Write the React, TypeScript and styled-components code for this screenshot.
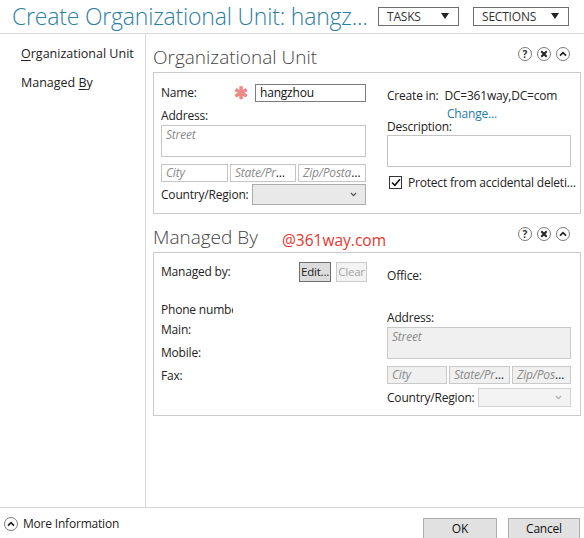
import React from "react";
import styled, { createGlobalStyle } from "styled-components";

const GlobalStyle = createGlobalStyle`
  html, body { margin: 0; padding: 0; background: #fff; }
  body {
    font-family: "Open Sans", "Noto Sans", sans-serif;
    font-size: 12px;
    letter-spacing: -0.2px;
    color: #222;
  }
  * { box-sizing: border-box; }
`;

const Page = styled.div`
  width: 584px;
  height: 538px;
  display: flex;
  flex-direction: column;
  overflow: hidden;
  background: #fff;
`;

const Header = styled.div`
  height: 34px;
  flex-shrink: 0;
  display: flex;
  align-items: center;
  padding: 0 15px 1px 12px;
  border-bottom: 1px solid #d9d9d9;
`;

const Title = styled.h1`
  margin: 0;
  font-weight: 300;
  font-size: 23px;
  line-height: 30px;
  color: #2d7ea3;
  white-space: nowrap;
  letter-spacing: -0.2px;
`;

const Dropdowns = styled.div`
  margin-left: auto;
  display: flex;
  gap: 14px;
`;

const Dropdown = styled.div<{ $w: number }>`
  width: ${(p) => p.$w}px;
  height: 19px;
  border: 1px solid #6e6e6e;
  display: flex;
  align-items: center;
  justify-content: space-between;
  padding: 0 9px 0 8px;
  font-size: 12px;
  color: #333;
  &::after {
    content: "";
    border-left: 4px solid transparent;
    border-right: 4px solid transparent;
    border-top: 6px solid #222;
  }
`;

const Body = styled.div`
  flex: 1;
  display: flex;
  min-height: 0;
`;

const Nav = styled.nav`
  width: 146px;
  flex-shrink: 0;
  border-right: 1px solid #d9d9d9;
  padding: 5px 0 0 21px;
`;

const NavItem = styled.div`
  line-height: 29px;
  font-size: 12.5px;
  letter-spacing: 0;
  color: #222;
  u { text-decoration: underline; text-underline-offset: 2px; }
`;

const Content = styled.div`
  flex: 1;
  padding: 0 3px 0 7px;
  display: flex;
  flex-direction: column;
`;

const SectionHead = styled.div`
  height: 38px;
  padding-top: 12px;
  display: flex;
  align-items: flex-start;
`;

const SectionTitle = styled.h2`
  margin: 0;
  font-weight: 300;
  font-size: 19px;
  line-height: 22px;
  letter-spacing: 0;
  color: #444;
  white-space: nowrap;
`;

const Watermark = styled.span`
  margin-left: 24px;
  margin-top: 3px;
  font-size: 15.5px;
  line-height: 22px;
  font-weight: 500;
  letter-spacing: 0;
  color: #e4362f;
`;

const HeadIcons = styled.div`
  margin-left: auto;
  margin-right: 11px;
  margin-top: 1px;
  display: flex;
  gap: 5px;
`;

const CircleBtn = styled.span`
  width: 14px;
  height: 14px;
  border: 1px solid #7a7a7a;
  border-radius: 50%;
  display: flex;
  align-items: center;
  justify-content: center;
  font-size: 10px;
  font-weight: 700;
  line-height: 1;
  letter-spacing: 0;
  color: #333;
  background: #fff;
`;

const Box = styled.div<{ $h: number; $pt: number }>`
  height: ${(p) => p.$h}px;
  border: 1px solid #cbcbcb;
  padding: ${(p) => p.$pt}px 9px 0 7px;
  display: grid;
  grid-template-columns: 205px 184px;
  column-gap: 21px;
  align-content: start;
`;

const Col = styled.div`
  display: flex;
  flex-direction: column;
`;

const Row = styled.div<{ $h: number; $mt?: number }>`
  height: ${(p) => p.$h}px;
  margin-top: ${(p) => p.$mt ?? 0}px;
  display: flex;
  align-items: center;
`;

const Label = styled.div<{ $lh?: number; $mt?: number; $w?: number }>`
  line-height: ${(p) => p.$lh ?? 16}px;
  margin-top: ${(p) => p.$mt ?? 0}px;
  ${(p) => (p.$w ? `width: ${p.$w}px; flex-shrink: 0;` : "")}
  white-space: nowrap;
  overflow: hidden;
  color: #222;
`;

const Star = styled.span`
  width: 21px;
  font-size: 17px;
  line-height: 18px;
  color: #ec8a8a;
  font-weight: 700;
`;

const Field = styled.div<{ $w?: number; $h: number; $off?: boolean; $dark?: boolean; $multi?: boolean }>`
  ${(p) => (p.$w ? `width: ${p.$w}px; flex-shrink: 0;` : "width: 100%;")}
  height: ${(p) => p.$h}px;
  border: 1px solid ${(p) => (p.$dark ? "#7d7d7d" : p.$off ? "#c9c9c9" : "#c4c4c4")};
  background: ${(p) => (p.$off ? "#f0f0f0" : "#fff")};
  padding: ${(p) => (p.$multi ? "1px 4px 0" : "0 4px")};
  line-height: ${(p) => (p.$multi ? 16 : p.$h - 3)}px;
  font-size: 12px;
  color: #111;
  white-space: nowrap;
  overflow: hidden;
  text-overflow: ellipsis;
`;

const Hint = styled.span`
  font-style: italic;
  color: #8a8a8a;
`;

const FieldRow = styled.div<{ $mt: number }>`
  margin-top: ${(p) => p.$mt}px;
  display: flex;
  gap: 2px;
`;

const Select = styled.div<{ $w: number; $h: number; $off?: boolean }>`
  width: ${(p) => p.$w}px;
  height: ${(p) => p.$h}px;
  margin-left: auto;
  border: 1px solid ${(p) => (p.$off ? "#d3d3d3" : "#acacac")};
  background: ${(p) => (p.$off ? "#f3f3f3" : "#e9e9e9")};
  display: flex;
  align-items: center;
  justify-content: flex-end;
  padding-right: 8px;
  color: ${(p) => (p.$off ? "#b0b0b0" : "#555")};
`;

const Link = styled.div`
  margin-left: 60px;
  margin-top: 2px;
  line-height: 16px;
  color: #1f7aa6;
`;

const CheckRow = styled.div`
  margin-top: 7px;
  display: flex;
  align-items: center;
  gap: 6px;
  padding-left: 2px;
  white-space: nowrap;
`;

const CheckBox = styled.span`
  width: 13px;
  height: 13px;
  border: 1px solid #333;
  background: #fff;
  display: flex;
  align-items: center;
  justify-content: center;
  flex-shrink: 0;
`;

const SmallBtn = styled.div<{ $w: number; $off?: boolean }>`
  width: ${(p) => p.$w}px;
  height: 20px;
  border: 1px solid ${(p) => (p.$off ? "#cacaca" : "#6f6f6f")};
  background: ${(p) => (p.$off ? "#f3f3f3" : "#dcdcdc")};
  color: ${(p) => (p.$off ? "#a3a3a3" : "#222")};
  line-height: 18px;
  font-size: 11.5px;
  text-align: center;
  white-space: nowrap;
  overflow: hidden;
`;

const BtnGroup = styled.div`
  margin-left: auto;
  margin-right: -1px;
  display: flex;
  gap: 5px;
`;

const Footer = styled.div`
  height: 31px;
  flex-shrink: 0;
  border-top: 1px solid #d4d4d4;
  display: flex;
  align-items: flex-start;
  padding: 0 4px 0 4px;
`;

const MoreInfo = styled.div`
  margin-top: 7px;
  display: flex;
  align-items: center;
  gap: 5px;
  color: #222;
`;

const FooterBtn = styled.div<{ $w: number }>`
  width: ${(p) => p.$w}px;
  height: 24px;
  margin-top: 10px;
  border: 1px solid #adadad;
  background: #e1e1e1;
  text-align: center;
  line-height: 20px;
  color: #111;
`;

const FooterBtns = styled.div`
  margin-left: auto;
  display: flex;
  gap: 11px;
`;

const Chevron = () => (
  <svg width="7" height="5" viewBox="0 0 7 5">
    <path d="M1 1 L3.5 3.6 L6 1" fill="none" stroke="currentColor" strokeWidth="1.2" />
  </svg>
);

const UpIcon = () => (
  <svg width="8" height="6" viewBox="0 0 8 6">
    <path d="M1 4.6 L4 1.6 L7 4.6" fill="none" stroke="#222" strokeWidth="1.7" />
  </svg>
);

const HeadTools = () => (
  <HeadIcons>
    <CircleBtn>?</CircleBtn>
    <CircleBtn>
      <svg width="8" height="8" viewBox="0 0 8 8">
        <path d="M1.3 1.3 L6.7 6.7 M6.7 1.3 L1.3 6.7" stroke="#222" strokeWidth="2" />
      </svg>
    </CircleBtn>
    <CircleBtn>
      <UpIcon />
    </CircleBtn>
  </HeadIcons>
);

export default function App() {
  return (
    <>
      <GlobalStyle />
      <Page>
        <Header>
          <Title>Create Organizational Unit: hangz...</Title>
          <Dropdowns>
            <Dropdown $w={81}>TASKS</Dropdown>
            <Dropdown $w={96}>SECTIONS</Dropdown>
          </Dropdowns>
        </Header>

        <Body>
          <Nav>
            <NavItem>
              <u>O</u>rganizational Unit
            </NavItem>
            <NavItem>
              Managed <u>B</u>y
            </NavItem>
          </Nav>

          <Content>
            <SectionHead>
              <SectionTitle>Organizational Unit</SectionTitle>
              <HeadTools />
            </SectionHead>
            <Box $h={142} $pt={11}>
              <Col>
                <Row $h={18}>
                  <Label $w={73}>Name:</Label>
                  <Star>✱</Star>
                  <Field $w={111} $h={18} $dark>
                    hangzhou
                  </Field>
                </Row>
                <Label $mt={6}>Address:</Label>
                <Field $h={32} $multi style={{ marginTop: 1 }}>
                  <Hint>Street</Hint>
                </Field>
                <FieldRow $mt={7}>
                  <Field $w={67} $h={18}>
                    <Hint>City</Hint>
                  </Field>
                  <Field $w={66} $h={18}>
                    <Hint>State/Province</Hint>
                  </Field>
                  <Field $w={68} $h={18}>
                    <Hint>Zip/Postal Code</Hint>
                  </Field>
                </FieldRow>
                <Row $h={21} $mt={2}>
                  <Label>Country/Region:</Label>
                  <Select $w={114} $h={21}>
                    <Chevron />
                  </Select>
                </Row>
              </Col>
              <Col>
                <Label $mt={4}>Create in:&nbsp; DC=361way,DC=com</Label>
                <Link>Change...</Link>
                <Label $lh={14} $mt={-2}>
                  Description:
                </Label>
                <Field $h={32} $multi style={{ marginTop: 1 }} />
                <CheckRow>
                  <CheckBox>
                    <svg width="10" height="9" viewBox="0 0 10 9">
                      <path d="M1 4.5 L3.8 7.3 L9 1.2" fill="none" stroke="#111" strokeWidth="1.6" />
                    </svg>
                  </CheckBox>
                  <span>Protect from accidental deleti...</span>
                </CheckRow>
              </Col>
            </Box>

            <SectionHead>
              <SectionTitle>Managed By</SectionTitle>
              <Watermark>@361way.com</Watermark>
              <HeadTools />
            </SectionHead>
            <Box $h={164} $pt={9}>
              <Col>
                <Row $h={20}>
                  <Label>Managed by:</Label>
                  <BtnGroup>
                    <SmallBtn $w={32}>Edit...</SmallBtn>
                    <SmallBtn $w={31} $off>
                      Clear
                    </SmallBtn>
                  </BtnGroup>
                </Row>
                <Label $mt={20} $w={72}>
                  Phone numbers:
                </Label>
                <Label $mt={4}>Main:</Label>
                <Label $mt={7}>Mobile:</Label>
                <Label $mt={7}>Fax:</Label>
              </Col>
              <Col>
                <Label $mt={6}>Office:</Label>
                <Label $mt={26}>Address:</Label>
                <Field $h={32} $off $multi style={{ marginTop: 1 }}>
                  <Hint>Street</Hint>
                </Field>
                <FieldRow $mt={7}>
                  <Field $w={60} $h={18} $off>
                    <Hint>City</Hint>
                  </Field>
                  <Field $w={61} $h={18} $off>
                    <Hint>State/Province</Hint>
                  </Field>
                  <Field $w={59} $h={18} $off>
                    <Hint>Zip/Postal Code</Hint>
                  </Field>
                </FieldRow>
                <Row $h={19} $mt={4}>
                  <Label>Country/Region:</Label>
                  <Select $w={93} $h={19} $off>
                    <Chevron />
                  </Select>
                </Row>
              </Col>
            </Box>
          </Content>
        </Body>

        <Footer>
          <MoreInfo>
            <CircleBtn>
              <UpIcon />
            </CircleBtn>
            <span>More Information</span>
          </MoreInfo>
          <FooterBtns>
            <FooterBtn $w={74}>OK</FooterBtn>
            <FooterBtn $w={72}>Cancel</FooterBtn>
          </FooterBtns>
        </Footer>
      </Page>
    </>
  );
}
